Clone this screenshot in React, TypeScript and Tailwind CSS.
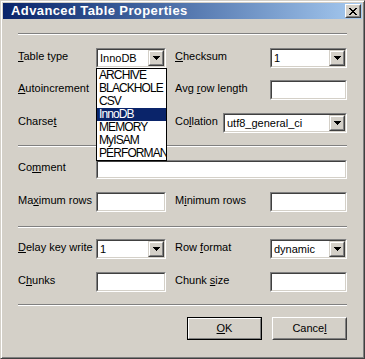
import React from 'react';

const FONT = "font-['Liberation_Sans',Arial,sans-serif]";

function Arrow() {
  return (
    <svg width="7" height="4" viewBox="0 0 7 4" shapeRendering="crispEdges">
      <rect x="0" y="0" width="7" height="1" fill="#000" />
      <rect x="1" y="1" width="5" height="1" fill="#000" />
      <rect x="2" y="2" width="3" height="1" fill="#000" />
      <rect x="3" y="3" width="1" height="1" fill="#000" />
    </svg>
  );
}

function CloseGlyph() {
  const rows = ['11000011', '01100110', '00111100', '00011000', '00111100', '01100110', '11000011'];
  return (
    <svg width="8" height="7" viewBox="0 0 8 7" shapeRendering="crispEdges">
      {rows.map((r, y) =>
        r.split('').map((c, x) => (c === '1' ? <rect key={`${x}-${y}`} x={x} y={y} width="1" height="1" fill="#000" /> : null))
      )}
    </svg>
  );
}

function DropButton() {
  return (
    <div className="w-[16px] h-full border border-t-[#d4d0c8] border-l-[#d4d0c8] border-b-[#404040] border-r-[#404040]">
      <div className="h-full border border-t-white border-l-white border-b-[#808080] border-r-[#808080] bg-[#d4d0c8] flex items-center justify-center">
        <Arrow />
      </div>
    </div>
  );
}

function Sunken({ className, children }: { className: string; children?: React.ReactNode }) {
  return (
    <div className={`${className} border border-t-[#808080] border-l-[#808080] border-b-white border-r-white`}>
      <div className="h-full border border-t-[#404040] border-l-[#404040] border-b-[#d4d0c8] border-r-[#d4d0c8] bg-white flex">
        {children}
      </div>
    </div>
  );
}

function Combo({ value, className }: { value: string; className: string }) {
  return (
    <Sunken className={className}>
      <div className="flex-1 pl-[2px] text-[11px] leading-[16px] text-black whitespace-nowrap overflow-hidden">{value}</div>
      <DropButton />
    </Sunken>
  );
}

function Label({ className, children }: { className: string; children: React.ReactNode }) {
  return <div className={`${className} text-[11px] text-black pb-[4px] whitespace-nowrap`}>{children}</div>;
}

function U({ children }: { children: React.ReactNode }) {
  return <span className="underline underline-offset-[1px]">{children}</span>;
}

function Separator({ className }: { className: string }) {
  return <div className={`${className} h-[2px] border-t border-t-[#808080] border-b border-b-white`} />;
}

const ENGINES = ['ARCHIVE', 'BLACKHOLE', 'CSV', 'InnoDB', 'MEMORY', 'MyISAM', 'PERFORMANCE_SCHEMA'];

export default function App() {
  return (
    <div className={`${FONT} w-[365px] h-[359px] bg-[#d4d0c8] border border-t-[#d4d0c8] border-l-[#d4d0c8] border-b-[#404040] border-r-[#404040] shadow-[inset_1px_1px_0_#fff,inset_-1px_-1px_0_#808080] p-[2px] flex flex-col`}>
      {/* Title bar */}
      <div className="h-[16px] bg-gradient-to-r from-[#0a246a] to-[#a6caf0] flex items-center pl-[8px] pr-[1px]">
        <div className="flex-1 text-white font-bold text-[13px] tracking-[0.4px] leading-[16px]">Advanced Table Properties</div>
        <div className="w-[16px] h-[14px] border border-t-white border-l-white border-b-[#404040] border-r-[#404040]">
          <div className="h-full border border-t-[#d4d0c8] border-l-[#d4d0c8] border-b-[#808080] border-r-[#808080] bg-[#d4d0c8] flex items-center justify-center">
            <CloseGlyph />
          </div>
        </div>
      </div>

      {/* Body */}
      <div className="pl-[15px] w-[344px] flex flex-col">
        <Separator className="mt-[14px]" />

        <div className="mt-[13px] h-[20px] flex items-center">
          <Label className="w-[78px]"><U>T</U>able type</Label>
          <div className="relative w-[70px] h-[20px]">
            <Combo value="InnoDB" className="w-[70px] h-[20px]" />
            <div className="absolute left-0 top-[20px] w-[71px] border border-black bg-white z-10">
              {ENGINES.map((e) => (
                <div
                  key={e}
                  className={`h-[13px] leading-[13px] text-[12px] tracking-[-0.9px] pl-[2px] whitespace-nowrap overflow-hidden ${e === 'InnoDB' ? 'bg-[#0a246a] text-white' : 'text-black'}`}
                >
                  {e}
                </div>
              ))}
            </div>
          </div>
          <div className="w-[9px]" />
          <Label className="w-[95px]"><U>C</U>hecksum</Label>
          <Combo value="1" className="w-[77px] h-[20px]" />
        </div>

        <div className="mt-[12px] h-[20px] flex items-center">
          <Label className="w-[78px]"><U>A</U>utoincrement</Label>
          <Sunken className="w-[70px] h-[20px]" />
          <div className="w-[9px]" />
          <Label className="w-[95px]">Avg <U>r</U>ow length</Label>
          <Sunken className="w-[77px] h-[20px]" />
        </div>

        <div className="mt-[13px] h-[20px] flex items-center">
          <Label className="w-[78px]">Charse<U>t</U></Label>
          <Combo value="" className="w-[70px] h-[20px]" />
          <div className="w-[9px]" />
          <Label className="w-[48px]">Co<U>l</U>lation</Label>
          <Combo value="utf8_general_ci" className="w-[124px] h-[20px]" />
        </div>

        <Separator className="mt-[12px]" />

        <div className="mt-[13px] h-[19px] flex items-center">
          <Label className="w-[78px]">Co<U>m</U>ment</Label>
          <Sunken className="flex-1 h-[19px]" />
        </div>

        <div className="mt-[13px] h-[20px] flex items-center">
          <Label className="w-[78px]">Ma<U>x</U>imum rows</Label>
          <Sunken className="w-[70px] h-[20px]" />
          <div className="w-[9px]" />
          <Label className="w-[95px]">M<U>i</U>nimum rows</Label>
          <Sunken className="w-[77px] h-[20px]" />
        </div>

        <Separator className="mt-[14px]" />

        <div className="mt-[11px] h-[20px] flex items-center">
          <Label className="w-[78px]"><U>D</U>elay key write</Label>
          <Combo value="1" className="w-[70px] h-[20px]" />
          <div className="w-[9px]" />
          <Label className="w-[95px]">Row <U>f</U>ormat</Label>
          <Combo value="dynamic" className="w-[77px] h-[20px]" />
        </div>

        <div className="mt-[13px] h-[20px] flex items-center">
          <Label className="w-[78px]">C<U>h</U>unks</Label>
          <Sunken className="w-[70px] h-[20px]" />
          <div className="w-[9px]" />
          <Label className="w-[95px]">Chunk <U>s</U>ize</Label>
          <Sunken className="w-[77px] h-[20px]" />
        </div>

        <Separator className="mt-[12px]" />

        <div className="mt-[11px] flex justify-end gap-[10px]">
          <button className="w-[75px] h-[23px] border border-black">
            <div className="h-full border border-t-white border-l-white border-b-[#808080] border-r-[#808080] flex items-center justify-center text-[11px] text-black">
              <U>O</U>K
            </div>
          </button>
          <button className="w-[75px] h-[23px] border border-t-white border-l-white border-b-[#404040] border-r-[#404040]">
            <div className="h-full border border-t-[#d4d0c8] border-l-[#d4d0c8] border-b-[#808080] border-r-[#808080] flex items-center justify-center text-[11px] text-black">
              Cance<U>l</U>
            </div>
          </button>
        </div>
      </div>
    </div>
  );
}
